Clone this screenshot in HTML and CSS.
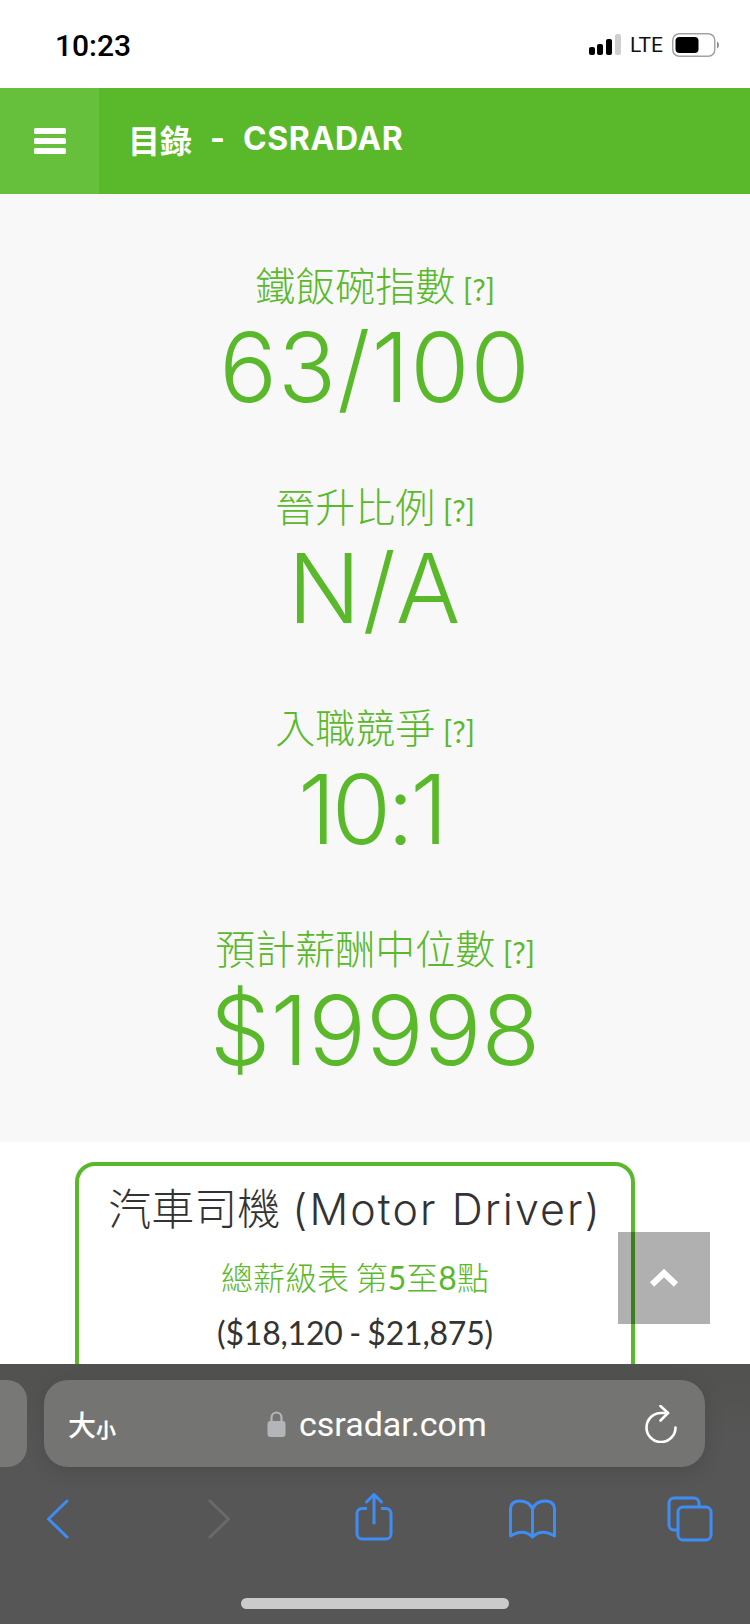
FILE: index.html
```html
<!DOCTYPE html>
<html lang="zh-Hant">
<head>
<meta charset="utf-8">
<title>目錄 - CSRADAR</title>
<link rel="stylesheet" href="styles.css">
</head>
<body>
<div class="status">
  <span class="time">10:23</span>
  <div class="status-right">
    <svg width="32" height="22" viewBox="0 0 32 22"><rect x="0" y="13" width="6" height="8" rx="2" fill="#000"/><rect x="8" y="10" width="6" height="11" rx="2" fill="#000"/><rect x="17" y="5" width="6" height="16" rx="2" fill="#000"/><rect x="26" y="0" width="6" height="21" rx="2" fill="#cfcfcf"/></svg>
    <span class="lte">LTE</span>
    <svg width="47" height="24" viewBox="0 0 47 24"><rect x="0.750" y="0.750" width="42" height="22.500" rx="6.500" fill="none" stroke="#a3a3a3" stroke-width="1.500"/><rect x="3.500" y="4" width="23" height="16" rx="4" fill="#000"/><path d="M45 8.500c1.500.8 2 2 2 3.500s-.5 2.700-2 3.500z" fill="#8f8f8f"/></svg>
  </div>
</div>
<header class="topbar">
  <div class="menu-btn">
    <svg width="32" height="26" viewBox="0 0 32 26"><rect x="0" y="0" width="32" height="6" rx="1.500" fill="#fff"/><rect x="0" y="10" width="32" height="6" rx="1.500" fill="#fff"/><rect x="0" y="20" width="32" height="6" rx="1.500" fill="#fff"/></svg>
  </div>
  <div class="brand"><span>目錄</span><span>-</span><span class="brand-name">CSRADAR</span></div>
</header>
<section class="stats">
  <div class="stat"><div class="label">鐵飯碗指數 <span class="hint">[?]</span></div><div class="value value-a">63/100</div></div>
  <div class="stat"><div class="label">晉升比例 <span class="hint">[?]</span></div><div class="value value-b">N/A</div></div>
  <div class="stat"><div class="label">入職競爭 <span class="hint">[?]</span></div><div class="value value-c">10:1</div></div>
  <div class="stat"><div class="label">預計薪酬中位數 <span class="hint">[?]</span></div><div class="value">$19998</div></div>
</section>
<section class="cards">
  <div class="card">
    <div class="card-title">汽車司機 <span class="card-title-en">(Motor Driver)</span></div>
    <div class="card-sub">總薪級表 第<span class="digit">5</span>至<span class="digit">8</span>點</div>
    <div class="card-price">($18,120 - $21,875)</div>
  </div>
</section>
<div class="to-top">
  <svg width="30" height="20" viewBox="0 0 30 20"><path d="M3 16.500 15 5l12 11.500" fill="none" stroke="#fff" stroke-width="6"/></svg>
</div>
<div class="toolbar">
  <div class="address-row">
    <div class="tab-stub"></div>
    <div class="address">
      <span class="aa"><span class="aa-big">大</span><span class="aa-small">小</span></span>
      <div class="url">
        <svg width="19" height="27" viewBox="0 0 19 27"><path d="M4.500 12V7.500a5 5 0 0 1 10 0V12" fill="none" stroke="#b4b5b8" stroke-width="2.200"/><rect x="0.500" y="11" width="18" height="16" rx="3" fill="#b4b5b8"/></svg>
        <span class="url-text">csradar.com</span>
      </div>
      <svg width="34" height="38" viewBox="0 0 34 38"><path d="M23 8H16A14.500 14.500 0 1 0 30.500 22.500" fill="none" stroke="#fff" stroke-width="2.600" stroke-linecap="round"/><path d="M15.500 1 23 8l-7.500 7.500" fill="none" stroke="#fff" stroke-width="2.600" stroke-linecap="round" stroke-linejoin="round"/></svg>
    </div>
  </div>
  <div class="nav-row">
    <svg width="48" height="40" viewBox="0 0 48 40"><path d="M34 2 15.500 20 34 38" fill="none" stroke="#3e8df5" stroke-width="3" stroke-linecap="round" stroke-linejoin="round"/></svg>
    <svg width="48" height="40" viewBox="0 0 48 40"><path d="M19 2 37.500 20 19 38" fill="none" stroke="#6a6a6a" stroke-width="3" stroke-linecap="round" stroke-linejoin="round"/></svg>
    <svg width="48" height="54" viewBox="0 0 48 54"><path d="M31 16.500h5a5 5 0 0 1 5 5V42a5 5 0 0 1-5 5H12a5 5 0 0 1-5-5V21.500a5 5 0 0 1 5-5h5" fill="none" stroke="#3e8df5" stroke-width="3" stroke-linejoin="round"/><path d="M24 31V2.500M16.500 10 24 2.500 31.500 10" fill="none" stroke="#3e8df5" stroke-width="3" stroke-linecap="round" stroke-linejoin="round"/></svg>
    <svg width="48" height="40" viewBox="0 0 48 40"><path d="M24.500 10C22.500 5 17.500 2 11.500 2 5.500 2 2.500 5 2.500 11V37c8-5 16-5 22 1 6-6 14-6 22-1V11c0-6-3-9-9-9-6 0-11 3-13 8V38" fill="none" stroke="#3e8df5" stroke-width="3" stroke-linejoin="round"/></svg>
    <svg width="48" height="46" viewBox="0 0 48 46"><path d="M12 34H8a5 5 0 0 1-5-5V7a5 5 0 0 1 5-5h20a5 5 0 0 1 5 5v4" fill="none" stroke="#3e8df5" stroke-width="3"/><rect x="12" y="11" width="33" height="33" rx="5" fill="none" stroke="#3e8df5" stroke-width="3"/></svg>
  </div>
  <div class="home-indicator"></div>
</div>
</body>
</html>
```
FILE: styles.css
```css
* { box-sizing: border-box; }
html, body { margin: 0; padding: 0; height: 1624px; overflow: hidden; background: #fff; }
body { font-family: "Lato", "Noto Sans CJK TC", sans-serif; position: relative; }

.status { height: 88px; display: flex; align-items: center; justify-content: space-between; padding: 2px 31px 0 55px; background: #fff; }
.time { font: 500 30px "Roboto", sans-serif; color: #000; }
.status-right { display: flex; align-items: center; gap: 9px; }
.lte { font: 400 21px "Roboto", sans-serif; color: #111; }

.topbar { height: 106px; background: #5ab92b; display: flex; align-items: stretch; }
.menu-btn { width: 99px; background: #67c03b; display: flex; align-items: center; justify-content: center; }
.brand { margin: 0 0 5px 29px; align-self: center; display: flex; align-items: center; gap: 18px; font: 700 32px "Inter", "Noto Sans CJK TC", sans-serif; color: #fff; }
.brand-name { letter-spacing: .6px; }

.stats { height: 948px; background: #f8f8f8; padding-top: 64px; display: flex; flex-direction: column; }
.stat { height: 222px; text-align: center; color: #5ab92b; }
.label { font: 300 40px/56px "Lato", "Noto Sans CJK TC", sans-serif; word-spacing: -3px; }
.hint { font-size: 30px; font-weight: 400; }
.value { font: 300 96px/104px "Inter", sans-serif; margin-top: -2px; }
.value-a { letter-spacing: 1px; }
.value-b { letter-spacing: 2px; }
.value-c { letter-spacing: -4px; padding-right: 8px; }

.cards { padding: 20px 0 0 75px; background: #fff; }
.card { width: 560px; height: 400px; border: 4px solid #5ab92b; border-radius: 20px; text-align: center; padding-top: 11px; }
.card-title { font: 300 43px/64px "Inter", "Noto Sans CJK TC", sans-serif; color: #333; white-space: nowrap; }
.card-title-en { letter-spacing: 2.100px; }
.card-sub { font: 300 32px/48px "Lato", "Noto Sans CJK TC", sans-serif; color: #5ab92b; margin-top: 13px; word-spacing: -2px; }
.digit { font-weight: 400; }
.card-price { font: 400 32px/48px "Lato", "Noto Sans CJK TC", sans-serif; color: #333; margin-top: 7px; letter-spacing: -.2px; word-spacing: -1.500px; }

.to-top { position: absolute; left: 618px; top: 1232px; width: 92px; height: 92px; background: rgba(0,0,0,.31); display: flex; align-items: center; justify-content: center; }

.toolbar { position: absolute; left: 0; right: 0; top: 1364px; height: 260px; background: linear-gradient(#51524f, #565656 30%); }
.address-row { display: flex; gap: 17px; padding-top: 16px; }
.tab-stub { width: 27px; height: 87px; border-radius: 0 20px 20px 0; background: #787977; }
.address { width: 661px; height: 87px; border-radius: 24px; background: #747573; box-shadow: 0 4px 20px rgba(0,0,0,.12); display: flex; align-items: center; position: relative; padding: 0 26px 0 24px; justify-content: space-between; }
.aa { color: #fff; font-weight: 500; display: flex; align-items: flex-end; }
.aa-big { font-size: 28px; }
.aa-small { font-size: 20px; font-weight: 700; }
.url { position: absolute; left: 223px; top: 0; bottom: 0; display: flex; align-items: center; gap: 13px; }
.url-text { font: 400 34px "Roboto", sans-serif; color: #fff; }

.nav-row { display: flex; align-items: center; justify-content: space-between; padding: 0 36px 0 33px; margin-top: 25px; height: 54px; }
.home-indicator { position: absolute; left: 241px; top: 234px; width: 268px; height: 11px; border-radius: 6px; background: #cbcbcb; }
```
